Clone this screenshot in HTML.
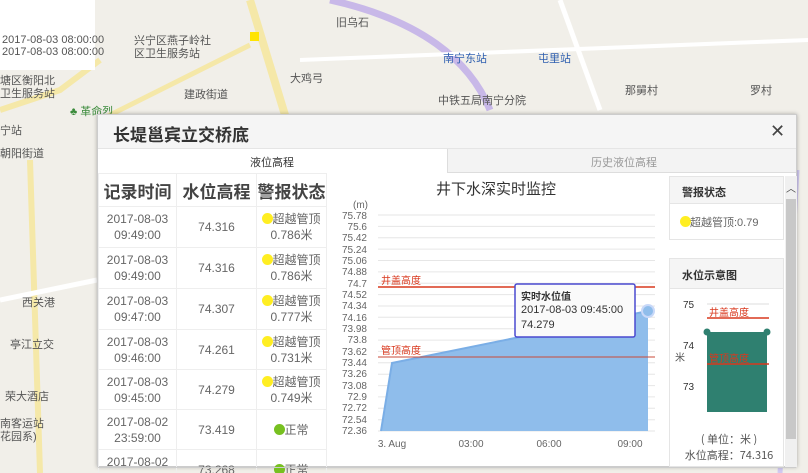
<!DOCTYPE html>
<html><head><meta charset="utf-8"><style>
*{margin:0;padding:0;box-sizing:border-box}
html,body{width:808px;height:473px;overflow:hidden}
body{position:relative;background:#f1efe9;font-family:"Liberation Sans","Noto Sans CJK SC",sans-serif;color:#333}
.a{position:absolute}
.map{font-size:11px;color:#555}
.dlg{left:97px;top:114px;width:700px;height:353px;background:#fff;border:1px solid #ccc;box-shadow:0 0 4px rgba(0,0,0,.3)}
table{border-collapse:collapse}
td{border:1px solid #eee;text-align:center;font-size:12px;color:#666;line-height:16px}
th{font-size:17px;color:#444;font-weight:bold;border:1px solid #eee;height:33px}
.dot{display:inline-block;width:11px;height:11px;border-radius:50%;background:#ffee22;vertical-align:-1px;margin-right:-1px}
.g{background:#77c020}
</style></head><body>
<svg class="a" style="left:0;top:0" width="808" height="473">
<path d="M250 0 L285 115" stroke="#f5e8a8" stroke-width="8" fill="none"/>
<path d="M100 120 L250 45" stroke="#f5e8a8" stroke-width="5" fill="none"/>
<path d="M330 0 C420 20,470 60,490 110" stroke="#c8b8e8" stroke-width="7" fill="none"/>
<path d="M560 0 L600 110" stroke="#fff" stroke-width="5" fill="none"/>
<path d="M300 60 L808 40" stroke="#fff" stroke-width="4" fill="none"/>
<path d="M0 110 L60 90 L100 60" stroke="#f5e8a8" stroke-width="6" fill="none"/>
<path d="M30 160 L40 473" stroke="#f5e8a8" stroke-width="6" fill="none"/>
<path d="M0 300 L97 280" stroke="#fff" stroke-width="5" fill="none"/>
<path d="M797 170 L780 473" stroke="#d0c8f0" stroke-width="5" fill="none"/>
<rect x="0" y="0" width="95" height="70" fill="#fff"/>
<rect x="250" y="32" width="9" height="9" fill="#ffe400"/>
</svg>
<div class="a map" style="left:2px;top:34px;line-height:12px">2017-08-03 08:00:00<br>2017-08-03 08:00:00</div>
<div class="a map" style="left:134px;top:35px;line-height:13px">兴宁区燕子岭社<br>区卫生服务站</div>
<div class="a map" style="left:336px;top:14px">旧乌石</div>
<div class="a map" style="left:443px;top:50px;color:#3060b0">南宁东站</div>
<div class="a map" style="left:538px;top:50px;color:#3060b0">屯里站</div>
<div class="a map" style="left:290px;top:70px">大鸡弓</div>
<div class="a map" style="left:184px;top:86px">建政街道</div>
<div class="a map" style="left:438px;top:92px">中铁五局南宁分院</div>
<div class="a map" style="left:625px;top:82px">那舅村</div>
<div class="a map" style="left:750px;top:82px">罗村</div>
<div class="a map" style="left:0px;top:75px;line-height:13px">塘区衡阳北<br>卫生服务站</div>
<div class="a map" style="left:70px;top:103px;color:#3a8a3a">♣ 革命烈</div>
<div class="a map" style="left:0;top:122px">宁站</div>
<div class="a map" style="left:0;top:145px">朝阳街道</div>
<div class="a map" style="left:22px;top:294px">西关港</div>
<div class="a map" style="left:10px;top:336px">亭江立交</div>
<div class="a map" style="left:5px;top:388px">荣大酒店</div>
<div class="a map" style="left:0px;top:418px;line-height:13px">南客运站<br>花园系)</div>
<div class="a dlg">
 <div class="a" style="left:0;top:0;width:698px;height:34px;background:#f5f5f5;border-bottom:1px solid #e5e5e5"></div>
 <div class="a" style="left:15px;top:6px;font-size:17px;font-weight:bold;color:#333">长堤邕宾立交桥底</div>
 <div class="a" style="left:672px;top:6px;font-size:18px;color:#444">✕</div>
 <div class="a" style="left:349px;top:34px;width:349px;height:24px;background:#f3f3f3;border-left:1px solid #ddd;border-bottom:1px solid #ddd"></div>
 <div class="a" style="left:152px;top:39px;font-size:11px;color:#333">液位高程</div>
 <div class="a" style="left:493px;top:39px;font-size:11px;color:#999">历史液位高程</div>
 <table class="a" style="left:0;top:58px;width:229px">
  <tr><th style="width:78px">记录时间</th><th style="width:80px">水位高程</th><th>警报状态</th></tr>
  <tr style="height:41px"><td>2017-08-03<br>09:49:00</td><td>74.316</td><td><span class="dot"></span>超越管顶<br>0.786米</td></tr>
  <tr style="height:41px"><td>2017-08-03<br>09:49:00</td><td>74.316</td><td><span class="dot"></span>超越管顶<br>0.786米</td></tr>
  <tr style="height:41px"><td>2017-08-03<br>09:47:00</td><td>74.307</td><td><span class="dot"></span>超越管顶<br>0.777米</td></tr>
  <tr style="height:40px"><td>2017-08-03<br>09:46:00</td><td>74.261</td><td><span class="dot"></span>超越管顶<br>0.731米</td></tr>
  <tr style="height:40px"><td>2017-08-03<br>09:45:00</td><td>74.279</td><td><span class="dot"></span>超越管顶<br>0.749米</td></tr>
  <tr style="height:40px"><td>2017-08-02<br>23:59:00</td><td>73.419</td><td><span class="dot g"></span>正常</td></tr>
  <tr style="height:40px"><td>2017-08-02<br>&nbsp;</td><td>73.268</td><td><span class="dot g"></span>正常</td></tr>
 </table>
 <div class="a" style="left:0;top:352px;width:698px;height:1px;background:#ccc"></div>
</div>
<svg class="a" style="left:325px;top:172px" width="343" height="290" font-family="Liberation Sans" font-size="10" fill="#666">
<text x="171" y="22" font-size="15" fill="#333" text-anchor="middle" font-family="Liberation Sans,Noto Sans CJK SC">井下水深实时监控</text>
<text x="28" y="36" fill="#666">(m)</text>
<g stroke="#e6e6e6">
<line x1="53" y1="43" x2="330" y2="43"/><line x1="53" y1="54.4" x2="330" y2="54.4"/><line x1="53" y1="65.7" x2="330" y2="65.7"/><line x1="53" y1="77.1" x2="330" y2="77.1"/><line x1="53" y1="88.5" x2="330" y2="88.5"/><line x1="53" y1="99.9" x2="330" y2="99.9"/><line x1="53" y1="111.2" x2="330" y2="111.2"/><line x1="53" y1="122.6" x2="330" y2="122.6"/><line x1="53" y1="134" x2="330" y2="134"/><line x1="53" y1="145.3" x2="330" y2="145.3"/><line x1="53" y1="156.7" x2="330" y2="156.7"/><line x1="53" y1="168.1" x2="330" y2="168.1"/><line x1="53" y1="179.4" x2="330" y2="179.4"/><line x1="53" y1="190.8" x2="330" y2="190.8"/><line x1="53" y1="202.2" x2="330" y2="202.2"/><line x1="53" y1="213.6" x2="330" y2="213.6"/><line x1="53" y1="224.9" x2="330" y2="224.9"/><line x1="53" y1="236.3" x2="330" y2="236.3"/><line x1="53" y1="247.7" x2="330" y2="247.7"/><line x1="53" y1="259" x2="330" y2="259"/>
</g>
<g text-anchor="end">
<text x="42" y="47">75.78</text><text x="42" y="58">75.6</text><text x="42" y="69">75.42</text><text x="42" y="81">75.24</text><text x="42" y="92">75.06</text><text x="42" y="103">74.88</text><text x="42" y="115">74.7</text><text x="42" y="126">74.52</text><text x="42" y="137">74.34</text><text x="42" y="149">74.16</text><text x="42" y="160">73.98</text><text x="42" y="171">73.8</text><text x="42" y="183">73.62</text><text x="42" y="194">73.44</text><text x="42" y="205">73.26</text><text x="42" y="217">73.08</text><text x="42" y="228">72.9</text><text x="42" y="239">72.72</text><text x="42" y="251">72.54</text><text x="42" y="262">72.36</text>
</g>
<path d="M56 259 L67 191 L323 139 L323 259 Z" fill="#8fbdeb"/>
<path d="M56 259 L67 191 L323 139" stroke="#7aaee6" stroke-width="2" fill="none"/>
<line x1="53" y1="115" x2="330" y2="115" stroke="#d9381e" stroke-width="1.5"/>
<line x1="53" y1="185" x2="330" y2="185" stroke="#c84a3a" stroke-width="1"/>
<text x="56" y="112" fill="#d9381e" font-family="Noto Sans CJK SC">井盖高度</text>
<text x="56" y="182" fill="#d9381e" font-family="Noto Sans CJK SC">管顶高度</text>
<circle cx="323" cy="139" r="6" fill="#8fbdeb" stroke="#c8d8f8" stroke-width="2"/>
<rect x="190" y="112" width="120" height="53" fill="#fafafa" stroke="#4a4ad0" stroke-width="1.5" rx="2"/>
<text x="196" y="128" fill="#333" font-weight="bold" font-family="Noto Sans CJK SC">实时水位值</text>
<text x="196" y="141" fill="#333" font-size="11">2017-08-03 09:45:00</text>
<text x="196" y="156" fill="#333" font-size="11">74.279</text>
<g text-anchor="middle"><text x="67" y="275">3. Aug</text><text x="146" y="275">03:00</text><text x="224" y="275">06:00</text><text x="305" y="275">09:00</text></g>
</svg>
<div class="a" style="left:669px;top:176px;width:115px;height:64px;border:1px solid #e5e5e5;background:#fff">
 <div style="height:27px;background:#f5f5f5;border-bottom:1px solid #e5e5e5;font-size:11px;font-weight:bold;padding:7px 12px;color:#333">警报状态</div>
 <div style="font-size:11px;color:#666;padding:10px 10px"><span class="dot"></span>超越管顶:0.79</div>
</div>
<div class="a" style="left:669px;top:258px;width:115px;height:209px;border:1px solid #e5e5e5;background:#fff">
 <div style="height:30px;background:#f5f5f5;border-bottom:1px solid #e5e5e5;font-size:11px;font-weight:bold;padding:8px 12px;color:#333">水位示意图</div>
</div>
<svg class="a" style="left:669px;top:288px" width="115" height="180" font-size="10" font-family="Liberation Sans">
<text x="14" y="20" fill="#333">75</text><text x="14" y="61" fill="#333">74</text><text x="14" y="102" fill="#333">73</text>
<text x="6" y="73" fill="#555" font-family="Noto Sans CJK SC">米</text>
<line x1="38" y1="16" x2="100" y2="16" stroke="#ddd"/>
<rect x="38" y="44" width="60" height="80" fill="#2f8070"/>
<circle cx="38" cy="44" r="3.5" fill="#2f8070"/><circle cx="98" cy="44" r="3.5" fill="#2f8070"/>
<line x1="38" y1="30" x2="100" y2="30" stroke="#d9381e" stroke-width="1.5"/>
<line x1="38" y1="76" x2="100" y2="76" stroke="#d9381e" stroke-width="1.5"/>
<text x="40" y="28" fill="#d9381e" font-family="Noto Sans CJK SC">井盖高度</text>
<text x="40" y="74" fill="#d9381e" font-family="Noto Sans CJK SC">管顶高度</text>
<text x="60" y="155" text-anchor="middle" fill="#555" font-size="11" font-family="Noto Sans CJK SC">( 单位：米 )</text>
<text x="60" y="171" text-anchor="middle" fill="#555" font-size="11" font-family="Noto Sans CJK SC">水位高程：74.316</text>
</svg>
<div class="a" style="left:785px;top:176px;width:12px;height:291px;background:#f0f0f0"></div>
<div class="a" style="left:786px;top:199px;width:10px;height:240px;background:#c8c8c8"></div>
<div class="a" style="left:786px;top:180px;font-size:10px;color:#444">︿</div>
</body></html>
